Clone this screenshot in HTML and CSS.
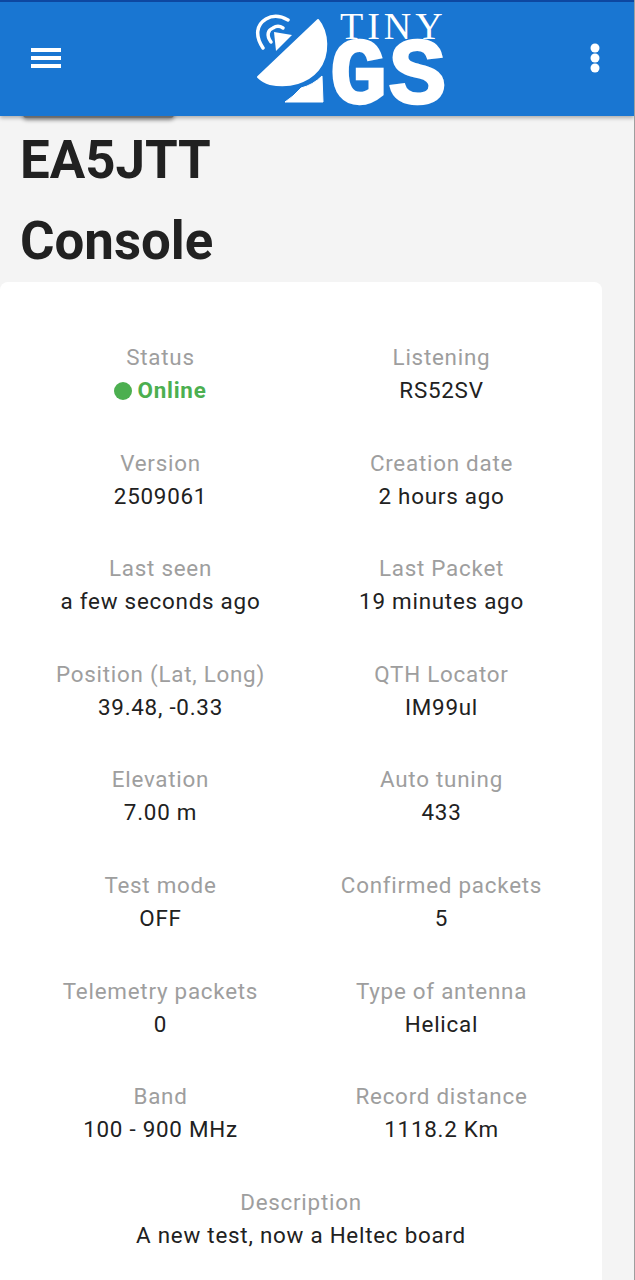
FILE: index.html
```html
<!DOCTYPE html>
<html lang="en">
<head>
    <meta charset="UTF-8">
    <meta name="viewport" content="width=device-width, initial-scale=1.0">
    <title>EA5JTT Console</title>
    <link rel="stylesheet" href="styles.css">
</head>
<body>
    <header class="app-bar">
        <svg class="menu-icon" width="30" height="20" viewBox="0 0 30 20">
            <path d="M0 0h30v4H0zM0 8h30v4H0zM0 16h30v4H0z" fill="#fff"/>
        </svg>
        <div class="logo">
            <svg class="logo-dish" width="76" height="92" viewBox="254 14 76 92">
                <path d="M318 20 C328 32 330 55 318 70 C308 82 290 88 270 84 Q263 82 258 77Z" fill="#fff" stroke="#fff" stroke-width="2" stroke-linejoin="round"/>
                <path d="M301 88 Q313 85 322 76 L323 102 L285 102 Q293 97 301 88Z" fill="#fff" stroke="#fff" stroke-width="1" stroke-linejoin="round"/>
                <path d="M274 32 L292 35 L276 51Z" fill="#fff"/>
                <path d="M263 48 C255 36 256 25 266 19 C273 15 281 16 288 20" fill="none" stroke="#fff" stroke-width="3.5" stroke-linecap="round"/>
                <path d="M271 42 C266 35 268 30 273 28 C276 26 280 26 283 28" fill="none" stroke="#fff" stroke-width="3.5" stroke-linecap="round"/>
            </svg>
            <div class="logo-text">
                <span class="logo-tiny">TINY</span>
                <span class="logo-gs">GS</span>
            </div>
        </div>
        <svg class="more-icon" width="10" height="30" viewBox="0 0 10 30">
            <circle cx="5" cy="5" r="4.5" fill="#fff"/>
            <circle cx="5" cy="15" r="4.5" fill="#fff"/>
            <circle cx="5" cy="25" r="4.5" fill="#fff"/>
        </svg>
    </header>

    <main class="content">
        <button class="hidden-button" type="button"></button>
        <h1 class="title title-first">EA5JTT</h1>
        <h1 class="title">Console</h1>

        <section class="card">
            <div class="info-grid">
                <div class="info">
                    <div class="info-label">Status</div>
                    <div class="info-value online"><span class="dot"></span>Online</div>
                </div>
                <div class="info">
                    <div class="info-label">Listening</div>
                    <div class="info-value">RS52SV</div>
                </div>
                <div class="info">
                    <div class="info-label">Version</div>
                    <div class="info-value">2509061</div>
                </div>
                <div class="info">
                    <div class="info-label">Creation date</div>
                    <div class="info-value">2 hours ago</div>
                </div>
                <div class="info">
                    <div class="info-label">Last seen</div>
                    <div class="info-value">a few seconds ago</div>
                </div>
                <div class="info">
                    <div class="info-label">Last Packet</div>
                    <div class="info-value">19 minutes ago</div>
                </div>
                <div class="info">
                    <div class="info-label">Position (Lat, Long)</div>
                    <div class="info-value">39.48, -0.33</div>
                </div>
                <div class="info">
                    <div class="info-label">QTH Locator</div>
                    <div class="info-value">IM99ul</div>
                </div>
                <div class="info">
                    <div class="info-label">Elevation</div>
                    <div class="info-value">7.00 m</div>
                </div>
                <div class="info">
                    <div class="info-label">Auto tuning</div>
                    <div class="info-value">433</div>
                </div>
                <div class="info">
                    <div class="info-label">Test mode</div>
                    <div class="info-value">OFF</div>
                </div>
                <div class="info">
                    <div class="info-label">Confirmed packets</div>
                    <div class="info-value">5</div>
                </div>
                <div class="info">
                    <div class="info-label">Telemetry packets</div>
                    <div class="info-value">0</div>
                </div>
                <div class="info">
                    <div class="info-label">Type of antenna</div>
                    <div class="info-value">Helical</div>
                </div>
                <div class="info">
                    <div class="info-label">Band</div>
                    <div class="info-value">100 - 900 MHz</div>
                </div>
                <div class="info">
                    <div class="info-label">Record distance</div>
                    <div class="info-value">1118.2 Km</div>
                </div>
                <div class="info info-wide">
                    <div class="info-label">Description</div>
                    <div class="info-value">A new test, now a Heltec board</div>
                </div>
            </div>
        </section>
    </main>
</body>
</html>
```

FILE: styles.css
```css
html, body {
    height: 1280px;
    overflow: hidden;
}
body {
    font-family: Roboto, Arial, sans-serif;
    margin: 0;
    background-color: #f4f4f4;
    border-right: 1px solid #9e9e9e;
}
.app-bar {
    position: relative;
    z-index: 2;
    height: 114px;
    border-top: 2px solid #0d47a1;
    background-color: #1976d2;
    box-shadow: 0 2px 4px rgba(0,0,0,0.3);
    display: flex;
    align-items: center;
    padding: 0 34px 0 31px;
}
.menu-icon {
    margin-top: -2px;
}
.more-icon {
    margin-top: -2px;
}
.logo {
    display: flex;
    align-items: flex-start;
    height: 114px;
    margin: 0 auto 0 193px;
}
.logo-dish {
    margin-top: 12px;
}
.logo-text {
    display: flex;
    flex-direction: column;
    align-items: flex-start;
    width: 118px;
    color: #fff;
}
.logo-tiny {
    font-family: "Liberation Serif", serif;
    font-size: 38px;
    line-height: 30px;
    letter-spacing: 4px;
    margin: 9px 0 0 10px;
}
.logo-gs {
    font-family: "Liberation Mono", monospace;
    font-weight: 700;
    font-size: 95px;
    line-height: 62px;
    letter-spacing: 2px;
    margin-top: 6px;
    -webkit-text-stroke: 2.5px #fff;
}
.content {
    padding: 0 32px 0 0;
}
.hidden-button {
    display: block;
    width: 151px;
    height: 36px;
    margin: -34px 0 0 23px;
    border: none;
    border-radius: 4px;
    background-color: #8a8a8a;
    box-shadow: 0 2px 4px rgba(0,0,0,0.4);
}
.title {
    margin: 0 0 0 20px;
    font-size: 52.8px;
    font-weight: 700;
    line-height: 81px;
    color: #212121;
}
.title-first {
    margin-top: 2px;
}
.card {
    background: white;
    border-radius: 8px;
    padding: 59px 20px 40px;
}
.info-grid {
    display: grid;
    grid-template-columns: 1fr 1fr;
    row-gap: 39.6px;
}
.info {
    text-align: center;
    font-size: 22.4px;
    line-height: 33px;
    letter-spacing: 0.75px;
}
.info-wide {
    grid-column: 1 / 3;
}
.info-label {
    color: #9e9e9e;
}
.info-value {
    color: #212121;
}
.online {
    color: #4caf50;
    font-weight: 700;
    display: flex;
    align-items: center;
    justify-content: center;
    gap: 6px;
    margin-left: -1px;
}
.dot {
    width: 18px;
    height: 18px;
    border-radius: 50%;
    background-color: #4caf50;
}
```
